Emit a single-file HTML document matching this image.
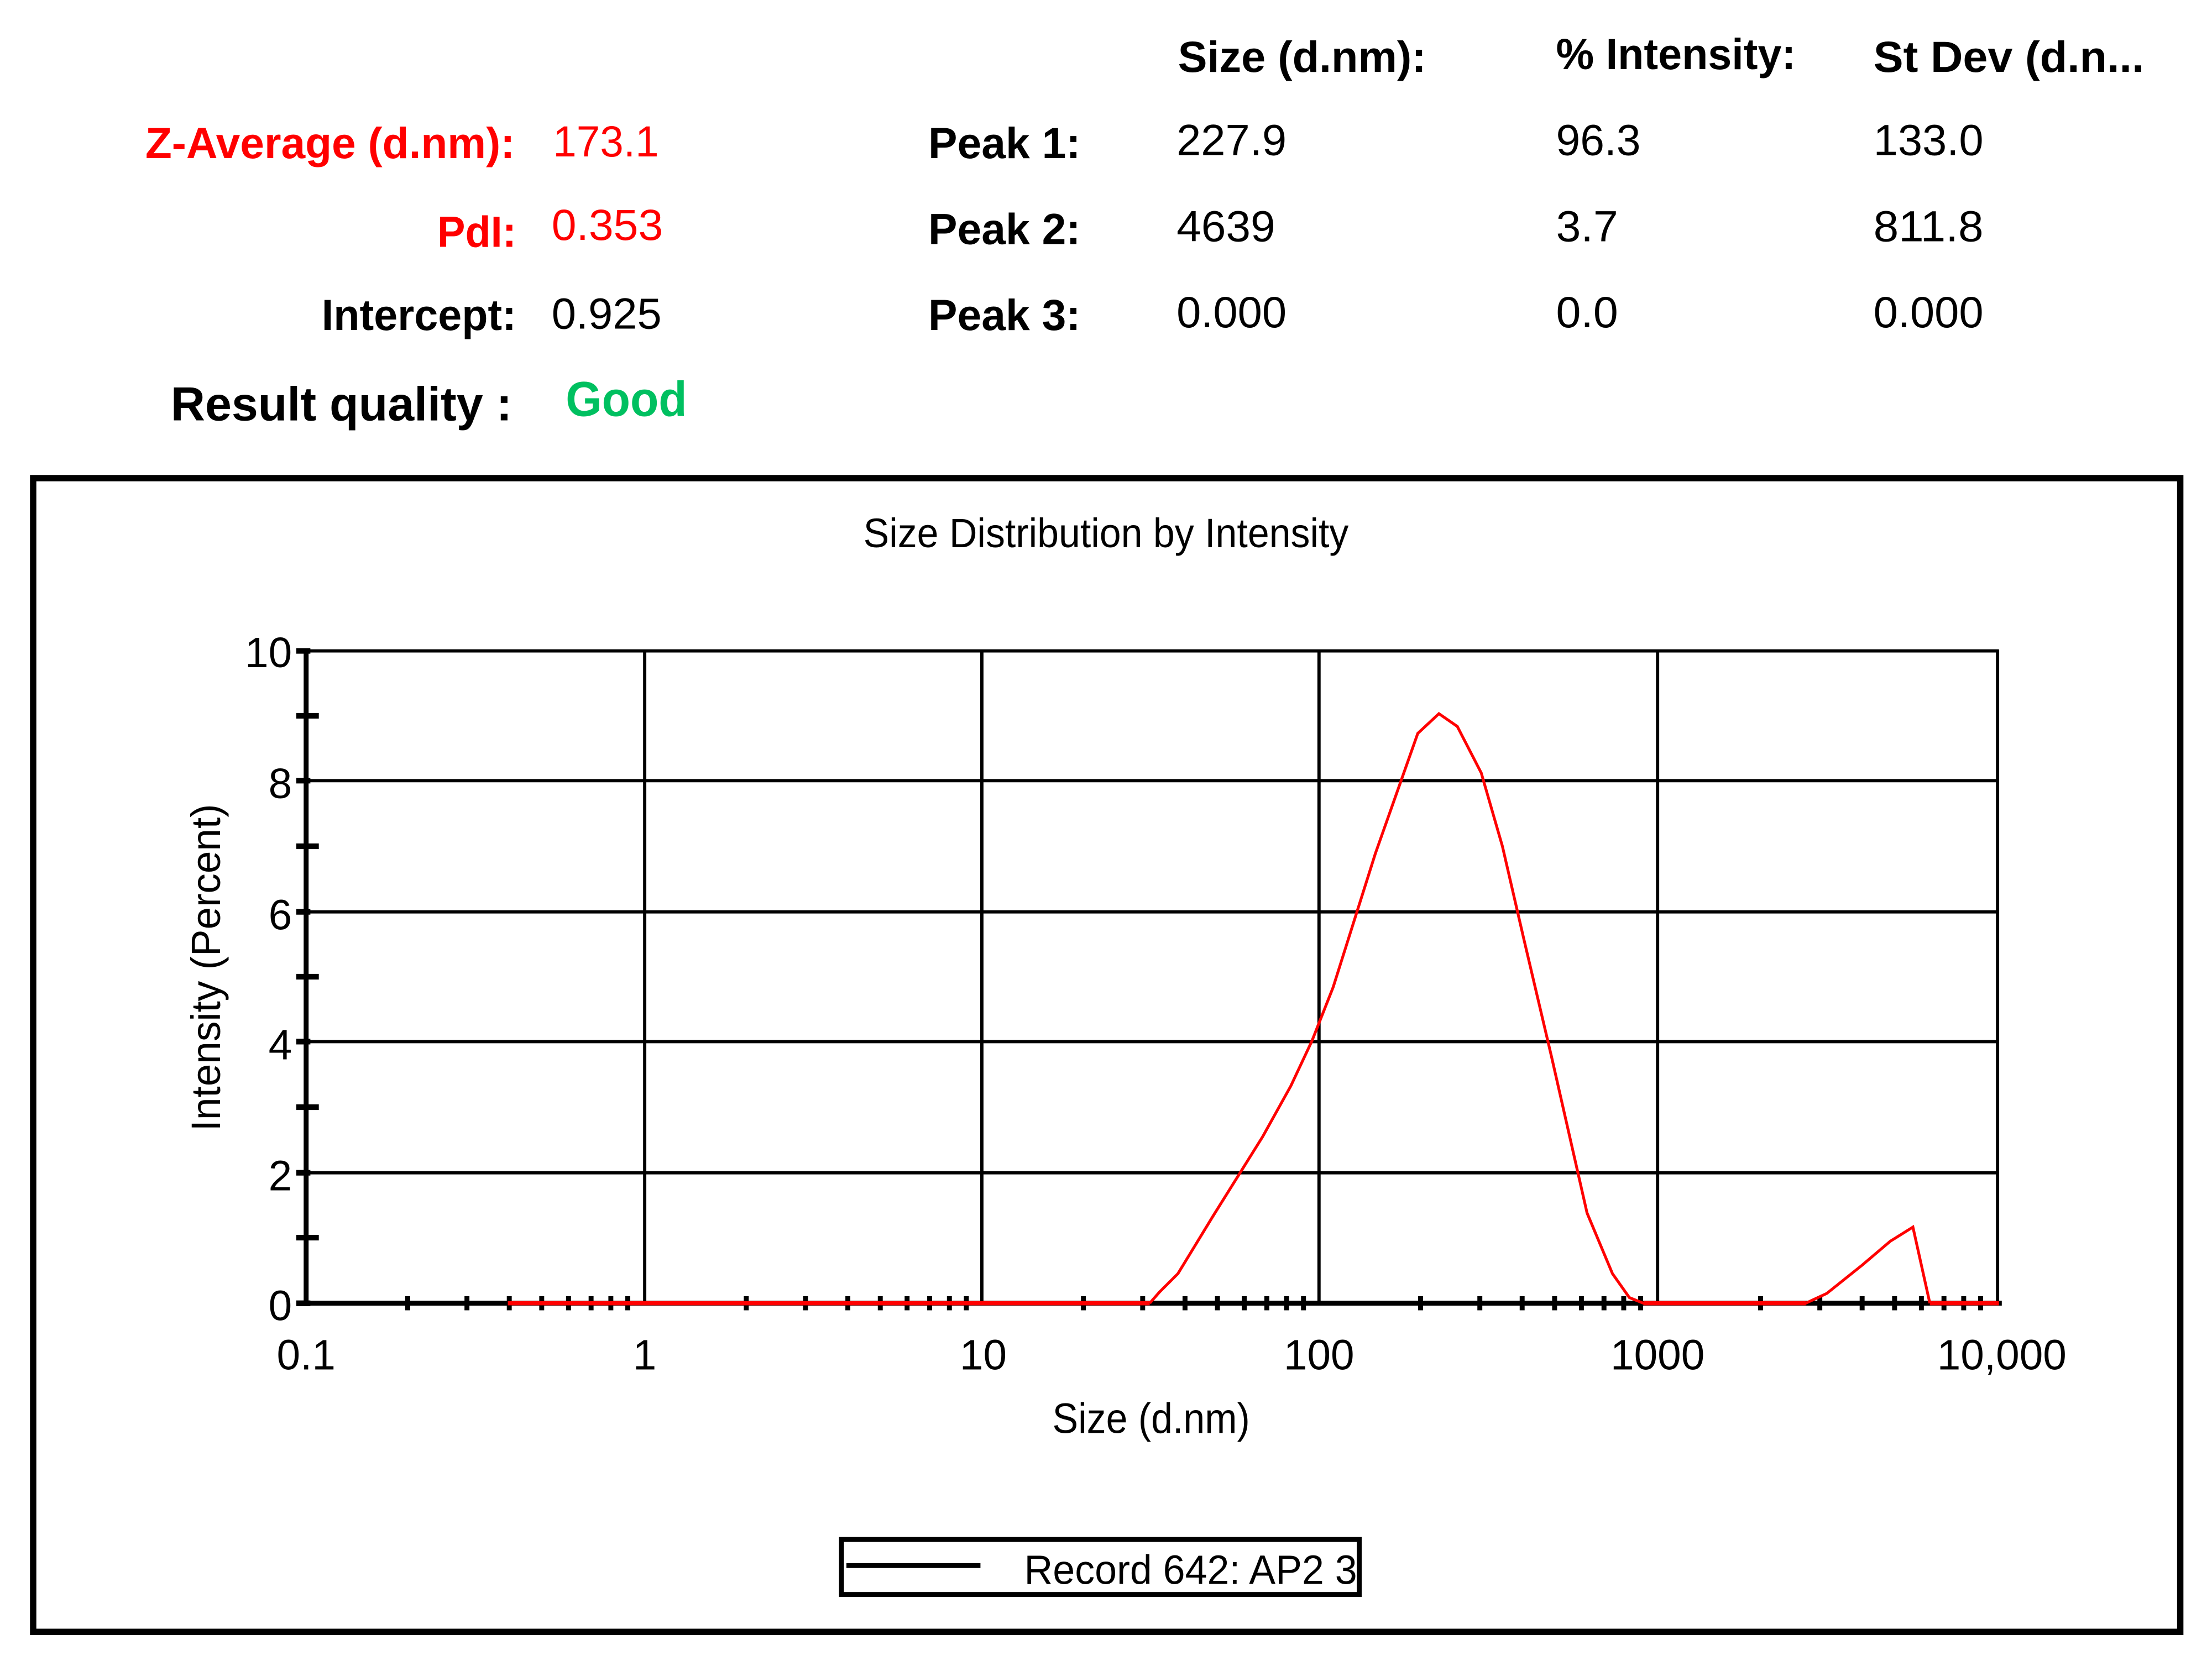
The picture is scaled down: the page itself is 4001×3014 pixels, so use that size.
<!DOCTYPE html>
<html><head><meta charset="utf-8"><style>
html,body{margin:0;padding:0;background:#fff;}
svg{display:block;}
text{font-family:"Liberation Sans",sans-serif;}
</style></head><body>
<svg width="4001" height="3014" viewBox="0 0 1568 1181.2" xmlns="http://www.w3.org/2000/svg">
<rect width="1568" height="1181.2" fill="#fff"/>
<g font-size="31" font-weight="bold" fill="#000">
<text x="835" y="51" textLength="176" lengthAdjust="spacingAndGlyphs">Size (d.nm):</text>
<text x="1103" y="49" textLength="170" lengthAdjust="spacingAndGlyphs">% Intensity:</text>
<text x="1328" y="51" textLength="192" lengthAdjust="spacingAndGlyphs">St Dev (d.n...</text>
<text x="658" y="112" textLength="108" lengthAdjust="spacingAndGlyphs">Peak 1:</text>
<text x="658" y="173" textLength="108" lengthAdjust="spacingAndGlyphs">Peak 2:</text>
<text x="658" y="234" textLength="108" lengthAdjust="spacingAndGlyphs">Peak 3:</text>
<text x="228" y="234" textLength="138" lengthAdjust="spacingAndGlyphs">Intercept:</text>
<text x="121" y="298" font-size="34" textLength="242" lengthAdjust="spacingAndGlyphs">Result quality :</text>
</g>
<g font-size="31" font-weight="bold" fill="#ff0000">
<text x="103" y="112" textLength="262" lengthAdjust="spacingAndGlyphs">Z-Average (d.nm):</text>
<text x="310" y="175" textLength="56" lengthAdjust="spacingAndGlyphs">PdI:</text>
</g>
<g font-size="31" fill="#ff0000">
<text x="392" y="111" textLength="75" lengthAdjust="spacingAndGlyphs">173.1</text>
<text x="391" y="170" textLength="79" lengthAdjust="spacingAndGlyphs">0.353</text>
</g>
<text x="401" y="295" font-size="35" font-weight="bold" fill="#00c060" textLength="86" lengthAdjust="spacingAndGlyphs">Good</text>
<g font-size="31" fill="#000">
<text x="391" y="233" textLength="78" lengthAdjust="spacingAndGlyphs">0.925</text>
<text x="834" y="110" textLength="78" lengthAdjust="spacingAndGlyphs">227.9</text>
<text x="834" y="171" textLength="70" lengthAdjust="spacingAndGlyphs">4639</text>
<text x="834" y="232" textLength="78" lengthAdjust="spacingAndGlyphs">0.000</text>
<text x="1103" y="110" textLength="60" lengthAdjust="spacingAndGlyphs">96.3</text>
<text x="1103" y="171" textLength="44" lengthAdjust="spacingAndGlyphs">3.7</text>
<text x="1103" y="232" textLength="44" lengthAdjust="spacingAndGlyphs">0.0</text>
<text x="1328" y="110" textLength="78" lengthAdjust="spacingAndGlyphs">133.0</text>
<text x="1328" y="171" textLength="78" lengthAdjust="spacingAndGlyphs">811.8</text>
<text x="1328" y="232" textLength="78" lengthAdjust="spacingAndGlyphs">0.000</text>
</g>
<rect x="23.5" y="339" width="1522" height="818" fill="none" stroke="#000" stroke-width="4.5"/>
<text x="784" y="388" font-size="29" text-anchor="middle" textLength="344" lengthAdjust="spacingAndGlyphs">Size Distribution by Intensity</text>
<g stroke="#000" stroke-width="2.3">
<line x1="457" y1="461" x2="457" y2="924"/><line x1="696" y1="461" x2="696" y2="924"/>
<line x1="935" y1="461" x2="935" y2="924"/><line x1="1175" y1="461" x2="1175" y2="924"/>
<line x1="1416" y1="461" x2="1416" y2="924"/>
<line x1="217" y1="461.5" x2="1417" y2="461.5"/><line x1="217" y1="553.5" x2="1417" y2="553.5"/>
<line x1="217" y1="646.5" x2="1417" y2="646.5"/><line x1="217" y1="738.5" x2="1417" y2="738.5"/>
<line x1="217" y1="831.5" x2="1417" y2="831.5"/>
</g>
<g stroke="#000" stroke-width="3.5">
<line x1="217" y1="460" x2="217" y2="926"/><line x1="215" y1="924" x2="1419" y2="924"/>
</g>
<g stroke="#000" stroke-width="4">
<line x1="210" y1="507.5" x2="226" y2="507.5"/><line x1="210" y1="600" x2="226" y2="600"/>
<line x1="210" y1="692.5" x2="226" y2="692.5"/><line x1="210" y1="785" x2="226" y2="785"/>
<line x1="210" y1="877.5" x2="226" y2="877.5"/>
<line x1="210" y1="461.5" x2="220" y2="461.5"/><line x1="210" y1="553.5" x2="220" y2="553.5"/>
<line x1="210" y1="646.5" x2="220" y2="646.5"/><line x1="210" y1="738.5" x2="220" y2="738.5"/>
<line x1="210" y1="831.5" x2="220" y2="831.5"/><line x1="210" y1="924" x2="220" y2="924"/>
</g>
<g stroke="#000" stroke-width="3.5">
<path d="M289 919v10M331 919v10M361 919v10M384 919v10M403 919v10M419 919v10M433 919v10M445 919v10
M529 919v10M571 919v10M601 919v10M624 919v10M643 919v10M659 919v10M673 919v10M685 919v10
M768 919v10M810 919v10M840 919v10M863 919v10M882 919v10M898 919v10M912 919v10M924 919v10
M1007 919v10M1049 919v10M1079 919v10M1102 919v10M1121 919v10M1137 919v10M1151 919v10M1163 919v10
M1248 919v10M1290 919v10M1320 919v10M1343 919v10M1362 919v10M1378 919v10M1392 919v10M1404 919v10"/>
</g>
<line x1="360" y1="924" x2="815" y2="924" stroke="#ff0000" stroke-width="3"/>
<line x1="1165" y1="924" x2="1280" y2="924" stroke="#ff0000" stroke-width="3"/>
<line x1="1368" y1="924" x2="1417" y2="924" stroke="#ff0000" stroke-width="3"/>
<polyline fill="none" stroke="#ff0000" stroke-width="2" points="815,924 822,916 835,903 860,862 895,806 915,770 930,738 945,700 975,605 1005,520 1020,506 1033,515 1050,548 1065,600 1080,665 1100,750 1125,860 1143,903 1155,920 1165,924 1280,924 1295,917 1320,897 1340,880 1356,870 1368,924"/>
<g font-size="30" fill="#000" text-anchor="end">
<text x="207" y="473">10</text><text x="207" y="566">8</text><text x="207" y="659">6</text>
<text x="207" y="751">4</text><text x="207" y="844">2</text><text x="207" y="936">0</text>
</g>
<g font-size="30" fill="#000" text-anchor="middle">
<text x="217" y="971">0.1</text><text x="457" y="971">1</text><text x="697" y="971">10</text>
<text x="935" y="971">100</text><text x="1175" y="971">1000</text><text x="1419" y="971">10,000</text>
<text x="816" y="1016" textLength="140" lengthAdjust="spacingAndGlyphs">Size (d.nm)</text>
</g>
<text transform="translate(156,686) rotate(-90)" font-size="29" text-anchor="middle" textLength="232" lengthAdjust="spacingAndGlyphs">Intensity (Percent)</text>
<rect x="596.5" y="1091.5" width="367" height="39" fill="#fff" stroke="#000" stroke-width="3.5"/>
<line x1="600" y1="1110" x2="695" y2="1110" stroke="#000" stroke-width="3.5"/>
<text x="726" y="1123" font-size="29" textLength="236" lengthAdjust="spacingAndGlyphs">Record 642: AP2 3</text>
</svg>
</body></html>
